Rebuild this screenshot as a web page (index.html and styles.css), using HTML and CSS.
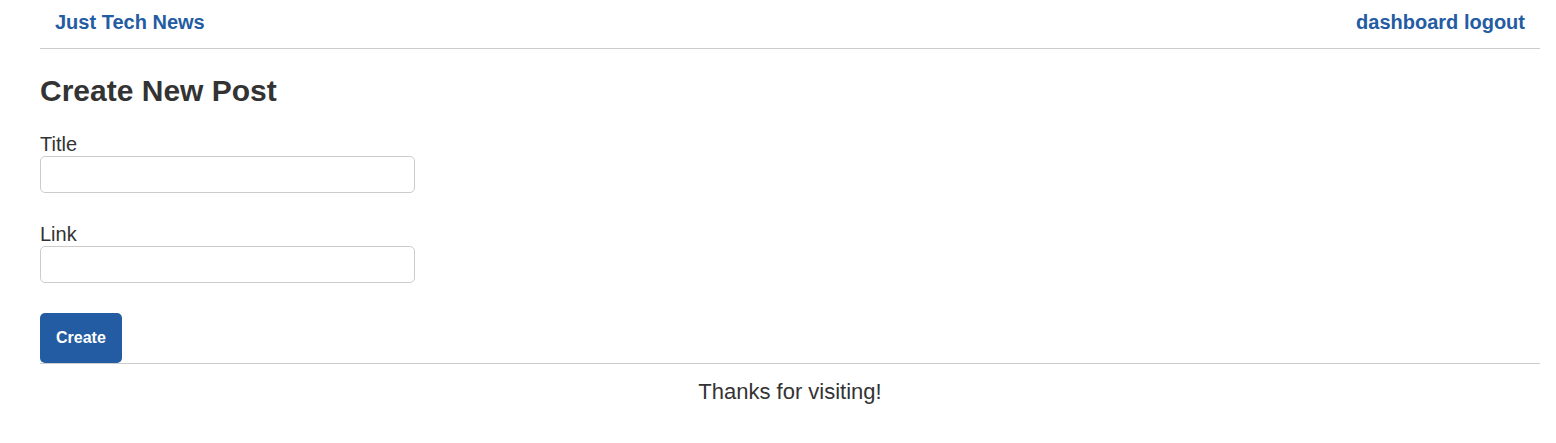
FILE: index.html
```html
<!DOCTYPE html>
<html lang="en">
<head>
<meta charset="utf-8">
<title>Just Tech News</title>
<link rel="stylesheet" href="styles.css">
</head>
<body>
<div class="page">
  <header class="site-header">
    <a class="brand" href="#">Just Tech News</a>
    <nav class="nav">
      <a href="#">dashboard</a> <a href="#">logout</a>
    </nav>
  </header>
  <main class="main">
    <h1 class="page-title">Create New Post</h1>
    <form class="post-form">
      <div class="field">
        <label class="field-label" for="title">Title</label>
        <input class="field-input" id="title" type="text">
      </div>
      <div class="field">
        <label class="field-label" for="link">Link</label>
        <input class="field-input" id="link" type="text">
      </div>
      <button class="btn" type="button">Create</button>
    </form>
  </main>
  <footer class="site-footer">Thanks for visiting!</footer>
</div>
</body>
</html>
```

FILE: styles.css
```css
* { box-sizing: border-box; }
html, body { margin: 0; padding: 0; background: #fff; }
body {
  font-family: "Liberation Sans", Arial, sans-serif;
  color: #333;
}
.page {
  margin: 0 16px 0 40px;
}
.site-header {
  display: flex;
  justify-content: space-between;
  align-items: center;
  padding: 11px 15px 14px 15px;
  border-bottom: 1px solid #ccc;
  font-size: 20px;
  line-height: 23px;
  font-weight: bold;
}
.site-header a {
  color: #235ca2;
  text-decoration: none;
}
.page-title {
  margin: 24px 0 25px 0;
  font-size: 30px;
  line-height: 35px;
  font-weight: bold;
  color: #333;
}
.post-form {
  display: flex;
  flex-direction: column;
  align-items: flex-start;
}
.field {
  display: flex;
  flex-direction: column;
  margin-bottom: 30px;
}
.field-label {
  font-size: 20px;
  line-height: 23px;
}
.field-input {
  width: 375px;
  height: 37px;
  border: 1px solid #ccc;
  border-radius: 5px;
  padding: 4px 8px;
  font: inherit;
  font-size: 16px;
  background: #fff;
}
.btn {
  height: 50px;
  padding: 0 16px;
  border: none;
  border-radius: 5px;
  background: #235ca2;
  color: #fff;
  font-family: "Liberation Sans", Arial, sans-serif;
  font-size: 16px;
  font-weight: bold;
}
.site-footer {
  border-top: 1px solid #ccc;
  padding-top: 15px;
  text-align: center;
  font-size: 22px;
  line-height: 25px;
  color: #333;
}
```
